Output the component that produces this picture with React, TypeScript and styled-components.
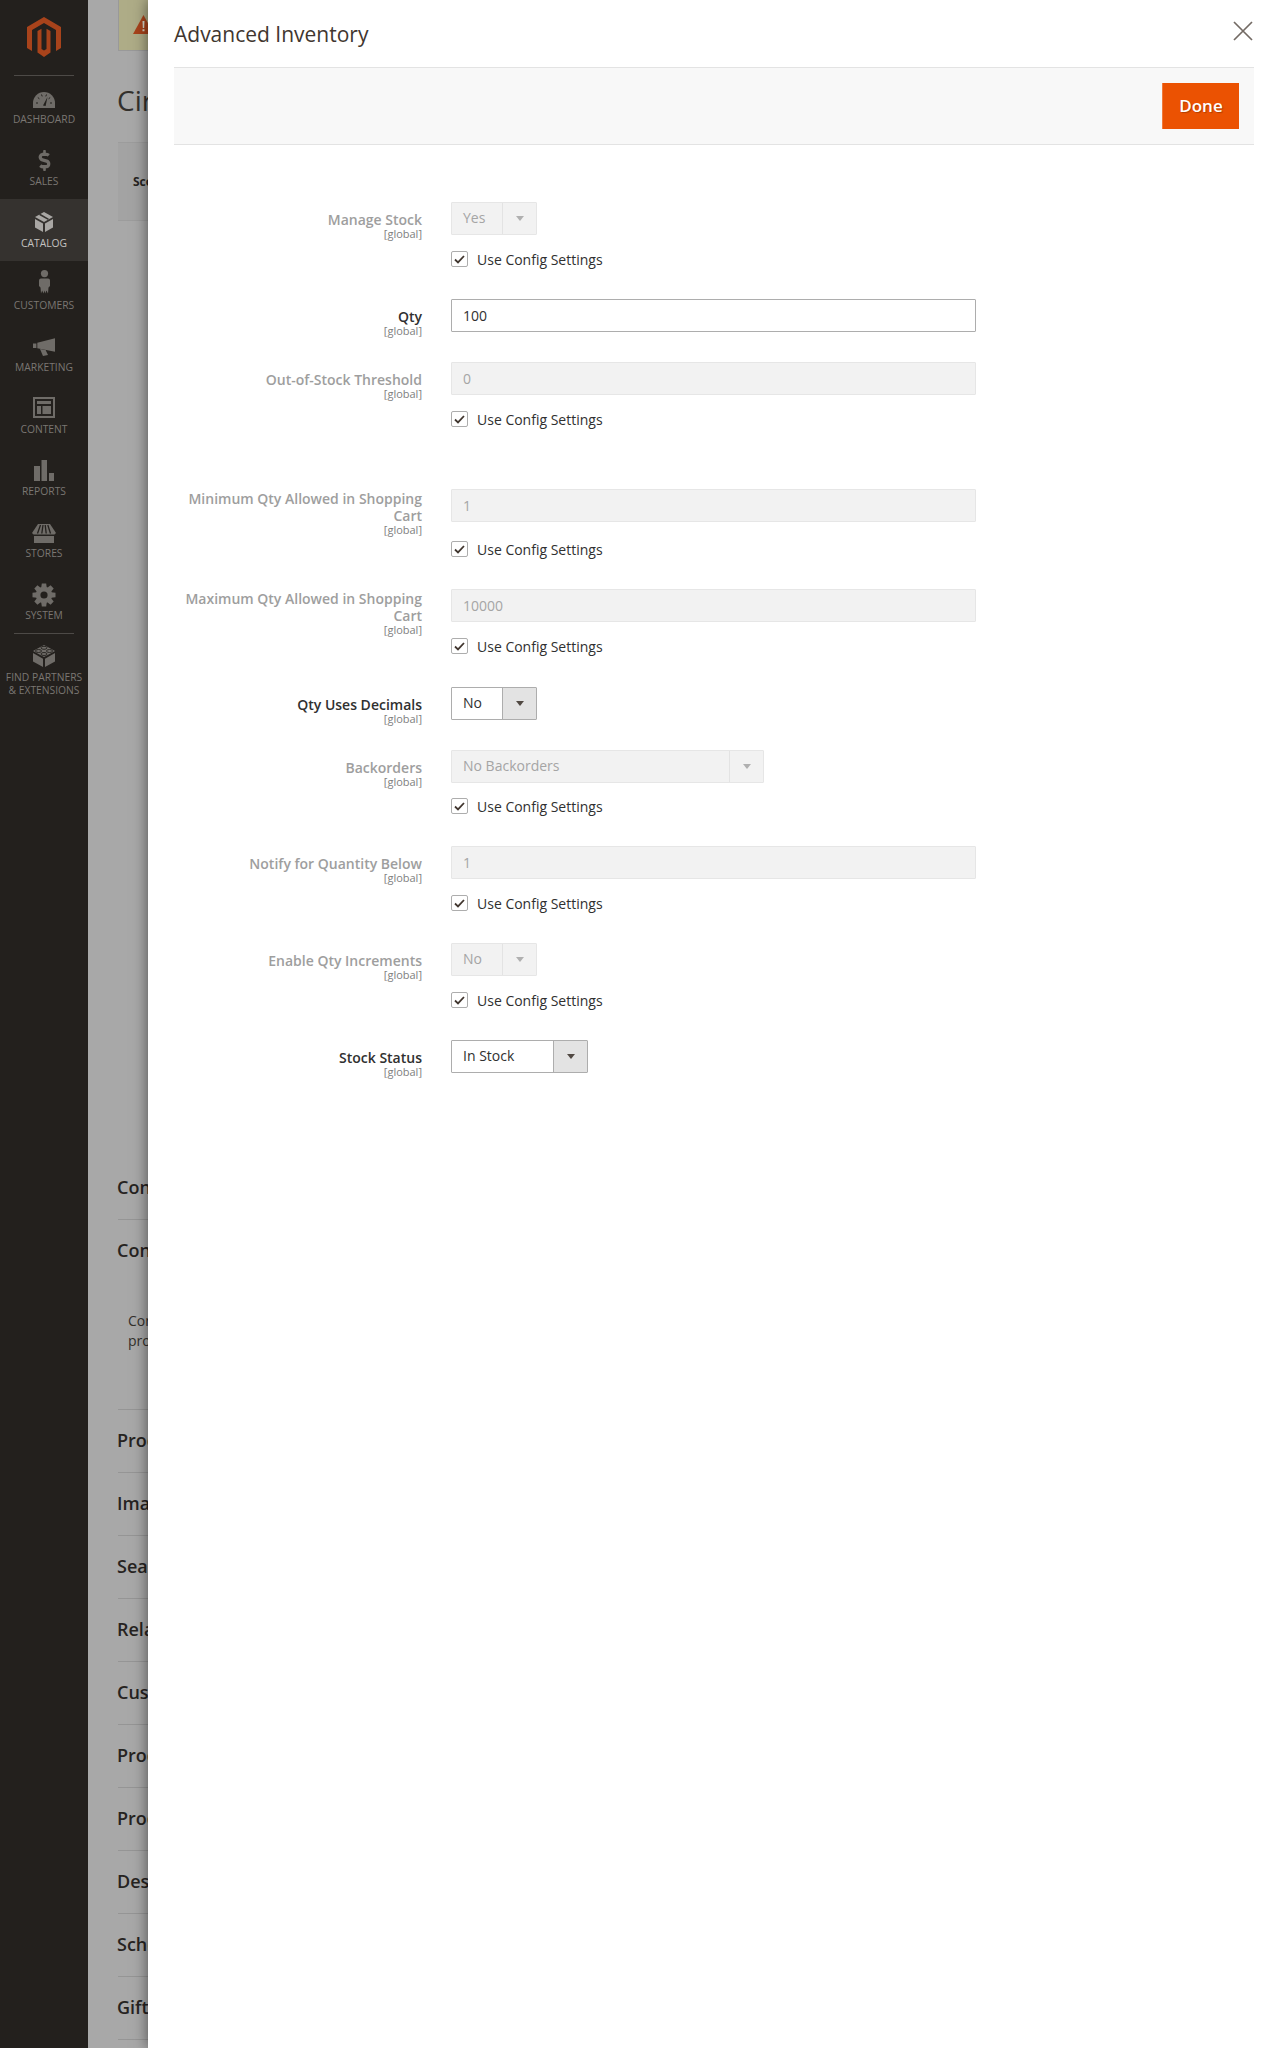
import React from "react";
import styled, { createGlobalStyle } from "styled-components";
import { FaDollarSign } from "react-icons/fa";

const Global = createGlobalStyle`
  html, body { margin: 0; padding: 0; height: 100%; overflow: hidden; }
  body { font-family: "Open Sans", "Liberation Sans", sans-serif; background: #fff; }
  * { box-sizing: border-box; }
`;

const Page = styled.div`
  display: flex;
  width: 1280px;
  height: 2048px;
  overflow: hidden;
`;

/* ---------- sidebar ---------- */
const Sidebar = styled.nav`
  flex: 0 0 88px;
  background: #23201d;
  display: flex;
  flex-direction: column;
`;
const LogoBox = styled.div`
  height: 75px;
  padding-top: 17px;
  display: flex;
  justify-content: center;
`;
const Rule = styled.div`
  height: 1px;
  margin: 0 14px -1px;
  background: #4d4a47;
`;
const NavItem = styled.div<{ $active?: boolean }>`
  height: 62px;
  padding-top: 11px;
  display: flex;
  flex-direction: column;
  align-items: center;
  background: ${(p) => (p.$active ? "#35322f" : "transparent")};
  color: ${(p) => (p.$active ? "#a9a7a4" : "#6f6c68")};
`;
const IconSlot = styled.div`
  width: 28px;
  height: 28px;
  flex: none;
  display: flex;
  align-items: center;
  justify-content: center;
  svg { overflow: visible; display: block; }
`;
const DollarIcon = styled(FaDollarSign)`
  margin-top: -3px;
`;
const NavLabel = styled.span<{ $active?: boolean }>`
  font-size: 10.3px;
  line-height: 13px;
  margin-top: -1px;
  text-align: center;
  text-transform: uppercase;
  white-space: nowrap;
  color: ${(p) => (p.$active ? "#c4c2c0" : "#7a7672")};
`;

const Ico: React.FC<{ children: React.ReactNode }> = ({ children }) => (
  <svg width="28" height="28" viewBox="0 0 28 28" fill="currentColor">{children}</svg>
);
const DARK = "#23201d";

const GaugeIcon = () => (
  <Ico>
    <path d="M3 22V17A11 11 0 0 1 25 17V22Z" />
    <g stroke={DARK} strokeWidth="1">
      <path d="M6 17H8M7.8 11.5L9.4 12.8M11.5 8.5L12.2 10.4M16.5 8.5L15.8 10.4M20.2 11.5L18.6 12.8M22 17H20" />
    </g>
    <path d="M13 19.5L17.5 11L15.6 20Z" fill={DARK} />
  </Ico>
);
const BoxIcon = () => (
  <Ico>
    <path d="M14 2L23 7L14 12L5 7Z" />
    <path d="M5 9L13 13.5V22L5 17.5Z" />
    <path d="M23 9L15 13.5V22L23 17.5Z" />
    <path d="M9.5 4.2L18.5 9.4" stroke="#35322f" strokeWidth="1.6" />
  </Ico>
);
const PersonIcon = () => (
  <Ico>
    <circle cx="14.5" cy="1.6" r="3.6" />
    <path d="M11 6.4H18Q20 6.4 20 8.4V14L18.5 15.5L18 21.4L16.4 18.4L15.2 21.4L14.5 18.6L13.4 21.4L12.2 18.4L11 21.4L10.5 15.5L9 14V8.4Q9 6.4 11 6.4Z" />
  </Ico>
);
const MegaphoneIcon = () => (
  <Ico>
    <path d="M3 9.5H6.4V14H3Z" />
    <path d="M7.3 8.7L25 4.3V17.7L7.3 14.3Z" />
    <path d="M10 15L15.6 16L18 21L13 22Z" />
  </Ico>
);
const ContentIcon = () => (
  <Ico>
    <path fillRule="evenodd" d="M3 1H25V22H3ZM5 3V20H23V3Z" />
    <path d="M7 5H21V8H7Z" />
    <path d="M7 10H11V18H7Z" />
    <path d="M12.5 10H21V18H12.5Z" />
  </Ico>
);
const ReportsIcon = () => (
  <Ico>
    <path d="M4 8H10V23H4Z" />
    <path d="M11.5 2H17V23H11.5Z" />
    <path d="M19 15H24V23H19Z" />
  </Ico>
);
const StoreIcon = () => (
  <Ico>
    <path d="M8 4H20L26 13L24.5 14.5H3.5L2 13Z" />
    <path d="M4 16H24V23H4Z" />
    <path d="M10.5 5L7.5 13.5M13 5L11.8 13.5M15.2 5L16.2 13.5M17.8 5L20.5 13.5" stroke={DARK} strokeWidth="1.3" />
  </Ico>
);
const GearIcon = () => (
  <Ico>
    {[0, 45, 90, 135, 180, 225, 270, 315].map((a) => (
      <path key={a} d="M11.8 1.5H16.2L16.8 6H11.2Z" transform={`rotate(${a} 14 13)`} />
    ))}
    <circle cx="14" cy="13" r="8.2" />
    <circle cx="14" cy="13" r="3.6" fill={DARK} />
  </Ico>
);
const LegoIcon = () => (
  <Ico>
    <path d="M14 1L25 7L14 13L3 7Z" />
    <path d="M3 9L13 14.8V23L3 17.5Z" />
    <path d="M25 9L15 14.8V23L25 17.5Z" />
    <g fill="none" stroke={DARK} strokeWidth=".9">
      <ellipse cx="14" cy="3.8" rx="3" ry="1.5" />
      <ellipse cx="8.5" cy="7" rx="3" ry="1.5" />
      <ellipse cx="19.5" cy="7" rx="3" ry="1.5" />
      <ellipse cx="14" cy="10" rx="3" ry="1.5" />
    </g>
  </Ico>
);

const navItems: { label: React.ReactNode; icon: React.ReactNode; active?: boolean; rule?: boolean }[] = [
  { label: "Dashboard", icon: <GaugeIcon /> },
  { label: "Sales", icon: <DollarIcon size={21} /> },
  { label: "Catalog", icon: <BoxIcon />, active: true },
  { label: "Customers", icon: <PersonIcon /> },
  { label: "Marketing", icon: <MegaphoneIcon /> },
  { label: "Content", icon: <ContentIcon /> },
  { label: "Reports", icon: <ReportsIcon /> },
  { label: "Stores", icon: <StoreIcon /> },
  { label: "System", icon: <GearIcon /> },
  { label: <>Find Partners<br />&amp; Extensions</>, icon: <LegoIcon />, rule: true },
];

/* ---------- dimmed page behind the slide ---------- */
const Backdrop = styled.div`
  flex: 0 0 60px;
  background: #a8a8a8;
  padding-left: 30px;
  overflow: hidden;
  white-space: nowrap;
`;
const Notice = styled.div`
  height: 51px;
  padding: 15px 0 0 14px;
  background: #aeac87;
  border-left: 1px solid #999;
  border-bottom: 1px solid #999;
  margin-bottom: 27px;
`;
const PageTitle = styled.h1`
  margin: 0;
  font-size: 28px;
  line-height: 44px;
  font-weight: 400;
  text-indent: -1px;
  color: #33302c;
`;
const ScopeBar = styled.div`
  height: 79px;
  margin: 20px 0 936px;
  padding: 30px 0 0 15px;
  background: #a3a3a3;
  border-top: 1px solid #9c9c9c;
  border-bottom: 1px solid #9c9c9c;
  font-size: 12px;
  line-height: 18px;
  font-weight: 700;
  color: #262321;
`;
const Section = styled.div<{ $open?: boolean }>`
  height: 63px;
  padding-top: 16px;
  border-bottom: ${(p) => (p.$open ? "0" : "1px solid #959595")};
  font-size: 18px;
  line-height: 28px;
  font-weight: 600;
  text-indent: -1px;
  color: #262321;
`;
const SectionBody = styled.div`
  height: 127px;
  padding: 28px 0 0 10px;
  border-bottom: 1px solid #959595;
  font-size: 14px;
  line-height: 20px;
  color: #33302c;
`;

/* ---------- slide panel ---------- */
const Slide = styled.main`
  flex: 1;
  min-width: 0;
  position: relative;
  z-index: 1;
  background: #fff;
  padding: 0 26px 0 26px;
  box-shadow: 0 0 14px rgba(0, 0, 0, 0.55);
`;
const SlideHead = styled.header`
  height: 67px;
  display: flex;
  justify-content: space-between;
  align-items: flex-start;
  padding-right: 1px;
`;
const SlideTitle = styled.h2`
  margin: 19px 0 0;
  font-size: 21px;
  line-height: 30px;
  font-weight: 400;
  color: #41362f;
`;
const CloseButton = styled.button`
  margin-top: 21px;
  padding: 0;
  width: 20px;
  height: 20px;
  border: 0;
  background: none;
  display: block;
`;
const ActionBar = styled.div`
  height: 78px;
  display: flex;
  justify-content: flex-end;
  align-items: center;
  padding-right: 15px;
  background: #f8f8f8;
  border-top: 1px solid #e3e3e3;
  border-bottom: 1px solid #e3e3e3;
`;
const DoneButton = styled.button`
  width: 77px;
  height: 46px;
  padding: 0;
  border: 0;
  border-left: 1px solid #f07a3a;
  background: #eb5202;
  color: #fff;
  font: 600 17px/46px "Open Sans", sans-serif;
  text-shadow: 1px 1px 1px rgba(0, 0, 0, 0.25);
`;
const Form = styled.form`
  padding-top: 57px;
  display: flex;
  flex-direction: column;
`;
const Field = styled.div<{ $after: number }>`
  display: grid;
  grid-template-columns: 248px 1fr;
  column-gap: 29px;
  margin-bottom: ${(p) => p.$after}px;
`;
const LabelCol = styled.div<{ $disabled?: boolean; $tall?: boolean }>`
  padding-top: ${(p) => (p.$tall ? 1 : 9)}px;
  text-align: right;
  color: ${(p) => (p.$disabled ? "#9e9e9e" : "#303030")};
`;
const LabelText = styled.label`
  display: block;
  font-size: 14px;
  line-height: 17px;
  font-weight: 600;
`;
const Scope = styled.span`
  display: block;
  font-size: 11px;
  line-height: 12px;
  color: #808080;
`;
const Control = styled.div`
  display: flex;
  flex-direction: column;
  align-items: flex-start;
`;
const TextInput = styled.input`
  width: 525px;
  height: 33px;
  padding: 0 11px;
  border: 1px solid #adadad;
  border-radius: 1px;
  outline: 0;
  background: #fff;
  color: #303030;
  font: 400 14px "Open Sans", sans-serif;
  &:disabled {
    background: #f2f2f2;
    border-color: #e6e6e6;
    color: #a5a5a5;
    -webkit-text-fill-color: #a5a5a5;
    opacity: 1;
  }
`;
const SelectBox = styled.div<{ $width: number; $disabled?: boolean }>`
  width: ${(p) => p.$width}px;
  height: 33px;
  display: flex;
  border: 1px solid ${(p) => (p.$disabled ? "#e6e6e6" : "#adadad")};
  border-radius: 1px;
  background: ${(p) => (p.$disabled ? "#f2f2f2" : "#fff")};
  color: ${(p) => (p.$disabled ? "#a5a5a5" : "#303030")};
  font-size: 14px;
  line-height: 30px;
`;
const SelectValue = styled.span`
  flex: 1;
  padding-left: 11px;
`;
const SelectArrow = styled.span<{ $disabled?: boolean }>`
  flex: 0 0 34px;
  display: flex;
  align-items: center;
  justify-content: center;
  background: ${(p) => (p.$disabled ? "#f2f2f2" : "#e3e3e3")};
  border-left: 1px solid ${(p) => (p.$disabled ? "#e3e3e3" : "#adadad")};
  &::after {
    content: "";
    width: 0;
    height: 0;
    border-left: 4px solid transparent;
    border-right: 4px solid transparent;
    border-top: 5px solid ${(p) => (p.$disabled ? "#b0b0b0" : "#514943")};
  }
`;
const ConfigRow = styled.div<{ $top: number }>`
  margin-top: ${(p) => p.$top}px;
  height: 16px;
  display: flex;
  align-items: center;
  gap: 9px;
  font-size: 14px;
  color: #303030;
`;
const CheckBox = styled.span`
  width: 17px;
  height: 16px;
  border: 1px solid #adadad;
  border-radius: 2px;
  background: #fff;
  display: flex;
  align-items: center;
  justify-content: center;
`;

const Check = () => (
  <CheckBox>
    <svg width="11" height="9" viewBox="0 0 11 9" fill="none" stroke="#41362f" strokeWidth="1.8">
      <path d="M1 4.5L4 7.4L10 1" />
    </svg>
  </CheckBox>
);
const UseConfig: React.FC<{ top?: number }> = ({ top = 16 }) => (
  <ConfigRow $top={top}>
    <Check />
    Use Config Settings
  </ConfigRow>
);
const Label: React.FC<{ text: string; disabled?: boolean; tall?: boolean }> = ({ text, disabled, tall }) => (
  <LabelCol $disabled={disabled} $tall={tall}>
    <LabelText>{text}</LabelText>
    <Scope>[global]</Scope>
  </LabelCol>
);
const Select: React.FC<{ value: string; width: number; disabled?: boolean }> = ({ value, width, disabled }) => (
  <SelectBox $width={width} $disabled={disabled}>
    <SelectValue>{value}</SelectValue>
    <SelectArrow $disabled={disabled} />
  </SelectBox>
);

const sections = ["Images And Videos", "Search Engine Optimization", "Related Products", "Customizable Options", "Product Alerts", "Product in Websites", "Design", "Schedule Design Update", "Gift Options"];

export default function App() {
  return (
    <Page>
      <Global />
      <Sidebar>
        <LogoBox>
          <svg width="34" height="40" viewBox="0 0 34 40" fill="#a8431b">
            <path d="M17 0L34 10V31L29 34V13L17 6L5 13V34L0 31V10Z" />
            <path d="M10.5 14L14.5 11.8V32L17 33.5L19.5 32V11.8L23.5 14V35.5L17 40L10.5 35.5Z" />
          </svg>
        </LogoBox>
        {navItems.map((n, i) => (
          <React.Fragment key={i}>
            {(i === 0 || n.rule) && <Rule />}
            <NavItem $active={n.active}>
              <IconSlot>{n.icon}</IconSlot>
              <NavLabel $active={n.active}>{n.label}</NavLabel>
            </NavItem>
          </React.Fragment>
        ))}
      </Sidebar>

      <Backdrop>
        <Notice>
          <svg width="21" height="19" viewBox="0 0 21 19">
            <path d="M10.5 0L21 19H0Z" fill="#a8431b" />
            <path d="M9.5 6H11.5L11.2 13H9.8ZM9.5 14.2H11.5V16.2H9.5Z" fill="#d8d8c8" />
          </svg>
        </Notice>
        <PageTitle>Circle Backpack</PageTitle>
        <ScopeBar>Scope</ScopeBar>
        <Section>Content</Section>
        <Section $open>Configurations</Section>
        <SectionBody>
          Configurable products allow customers to choose options
          <br />
          product variations.
        </SectionBody>
        <Section>Product Reviews</Section>
        {sections.map((s) => (
          <Section key={s}>{s}</Section>
        ))}
      </Backdrop>

      <Slide>
        <SlideHead>
          <SlideTitle>Advanced Inventory</SlideTitle>
          <CloseButton aria-label="Close">
            <svg width="20" height="20" viewBox="0 0 20 20" stroke="#736a64" strokeWidth="1.7" fill="none" display="block">
              <path d="M1 1L19 19M19 1L1 19" />
            </svg>
          </CloseButton>
        </SlideHead>
        <ActionBar>
          <DoneButton type="button">Done</DoneButton>
        </ActionBar>
        <Form>
          <Field $after={32}>
            <Label text="Manage Stock" disabled />
            <Control>
              <Select value="Yes" width={86} disabled />
              <UseConfig />
            </Control>
          </Field>
          <Field $after={25}>
            <Label text="Qty" />
            <Control>
              <TextInput defaultValue="100" />
            </Control>
          </Field>
          <Field $after={62}>
            <Label text="Out-of-Stock Threshold" disabled />
            <Control>
              <TextInput disabled defaultValue="0" />
              <UseConfig />
            </Control>
          </Field>
          <Field $after={32}>
            <Label text="Minimum Qty Allowed in Shopping Cart" disabled tall />
            <Control>
              <TextInput disabled defaultValue="1" />
              <UseConfig top={19} />
            </Control>
          </Field>
          <Field $after={33}>
            <Label text="Maximum Qty Allowed in Shopping Cart" disabled tall />
            <Control>
              <TextInput disabled defaultValue="10000" />
              <UseConfig />
            </Control>
          </Field>
          <Field $after={25}>
            <Label text="Qty Uses Decimals" />
            <Control>
              <Select value="No" width={86} />
            </Control>
          </Field>
          <Field $after={32}>
            <Label text="Backorders" disabled />
            <Control>
              <Select value="No Backorders" width={313} disabled />
              <UseConfig top={15} />
            </Control>
          </Field>
          <Field $after={32}>
            <Label text="Notify for Quantity Below" disabled />
            <Control>
              <TextInput disabled defaultValue="1" />
              <UseConfig />
            </Control>
          </Field>
          <Field $after={32}>
            <Label text="Enable Qty Increments" disabled />
            <Control>
              <Select value="No" width={86} disabled />
              <UseConfig />
            </Control>
          </Field>
          <Field $after={30}>
            <Label text="Stock Status" />
            <Control>
              <Select value="In Stock" width={137} />
            </Control>
          </Field>
        </Form>
      </Slide>
    </Page>
  );
}
